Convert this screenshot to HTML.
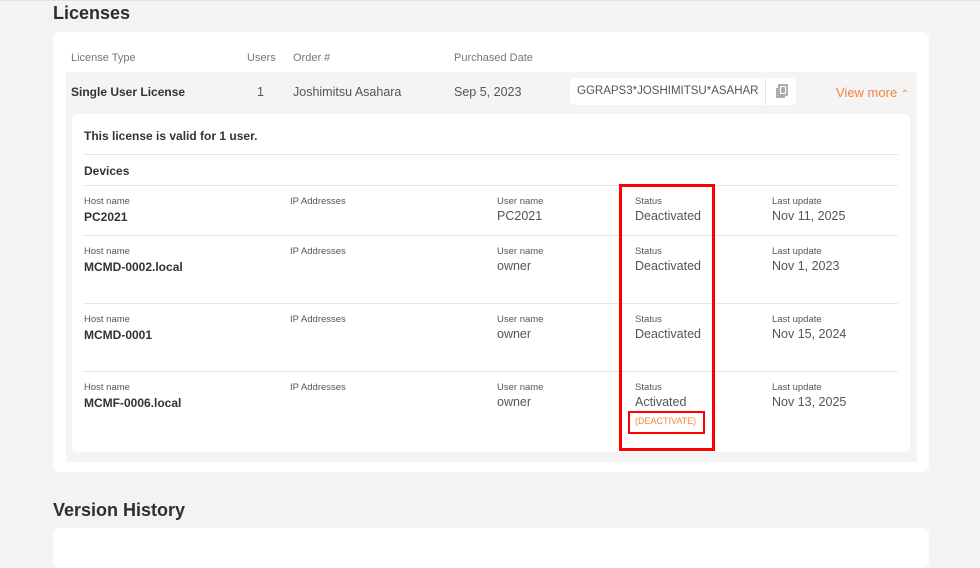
<!DOCTYPE html>
<html><head><style>
*{margin:0;padding:0;box-sizing:border-box}
body{width:980px;height:560px;background:#f3f3f3;font-family:"Liberation Sans",sans-serif;color:#333;position:relative;overflow:hidden}
.a{position:absolute;white-space:nowrap}
.h{font-size:18px;font-weight:bold;color:#2e2e2e}
.th{font-size:11px;color:#777}
.lb{font-size:9.5px;color:#555}
.v{font-size:12.5px;color:#555}
.b{font-size:12px;font-weight:bold;color:#333}
.line{position:absolute;left:84px;width:814px;height:1px;background:#e6e6e6}
</style></head><body>
<div class="a" style="left:0;top:0;width:980px;height:1px;background:#e2e2e2"></div>
<div class="a h" style="left:53px;top:3px">Licenses</div>
<div class="a" style="left:53px;top:32px;width:876px;height:440px;background:#fff;border-radius:6px"></div>
<div class="a th" style="left:71px;top:52px">License Type</div>
<div class="a th" style="left:247px;top:52px">Users</div>
<div class="a th" style="left:293px;top:52px">Order #</div>
<div class="a th" style="left:454px;top:52px">Purchased Date</div>
<div class="a" style="left:66px;top:72px;width:851px;height:390px;background:#f4f4f4"></div>
<div class="a b" style="left:71px;top:85px">Single User License</div>
<div class="a v" style="left:257px;top:85px">1</div>
<div class="a v" style="left:293px;top:85px">Joshimitsu Asahara</div>
<div class="a v" style="left:454px;top:85px">Sep 5, 2023</div>
<div class="a" style="left:570px;top:78px;width:226px;height:27px;background:#fff;border-radius:4px"></div>
<div class="a" style="left:765px;top:78px;width:1px;height:27px;background:#e6e6e6"></div>
<div class="a" style="left:577px;top:85px;font-size:11.5px;color:#555;width:182px;overflow:hidden">GGRAPS3*JOSHIMITSU*ASAHARA*8</div>
<svg class="a" style="left:775px;top:84px" width="14" height="14" viewBox="0 0 14 14" fill="none" stroke="#777" stroke-width="1.2"><rect x="4" y="1" width="8" height="10"/><path d="M2 4v9h8"/><path d="M6 4h4M6 6h4M6 8h4"/></svg>
<div class="a" style="left:836px;top:85px;font-size:13px;color:#f5843c">View more <span style="font-size:10px">⌃</span></div>
<div class="a" style="left:72px;top:114px;width:838px;height:338px;background:#fff;border-radius:5px"></div>
<div class="a b" style="left:84px;top:129px">This license is valid for 1 user.</div>
<div class="line" style="top:154px"></div>
<div class="a b" style="left:84px;top:164px">Devices</div>
<div class="line" style="top:185px"></div>
<div class="line" style="top:235px"></div>
<div class="line" style="top:303px"></div>
<div class="line" style="top:371px"></div>

<div class="a lb" style="left:84px;top:196px">Host name</div><div class="a b" style="left:84px;top:210px">PC2021</div>
<div class="a lb" style="left:290px;top:196px">IP Addresses</div>
<div class="a lb" style="left:497px;top:196px">User name</div><div class="a v" style="left:497px;top:209px">PC2021</div>
<div class="a lb" style="left:635px;top:196px">Status</div><div class="a v" style="left:635px;top:209px">Deactivated</div>
<div class="a lb" style="left:772px;top:196px">Last update</div><div class="a v" style="left:772px;top:209px">Nov 11, 2025</div>

<div class="a lb" style="left:84px;top:246px">Host name</div><div class="a b" style="left:84px;top:260px">MCMD-0002.local</div>
<div class="a lb" style="left:290px;top:246px">IP Addresses</div>
<div class="a lb" style="left:497px;top:246px">User name</div><div class="a v" style="left:497px;top:259px">owner</div>
<div class="a lb" style="left:635px;top:246px">Status</div><div class="a v" style="left:635px;top:259px">Deactivated</div>
<div class="a lb" style="left:772px;top:246px">Last update</div><div class="a v" style="left:772px;top:259px">Nov 1, 2023</div>

<div class="a lb" style="left:84px;top:314px">Host name</div><div class="a b" style="left:84px;top:328px">MCMD-0001</div>
<div class="a lb" style="left:290px;top:314px">IP Addresses</div>
<div class="a lb" style="left:497px;top:314px">User name</div><div class="a v" style="left:497px;top:327px">owner</div>
<div class="a lb" style="left:635px;top:314px">Status</div><div class="a v" style="left:635px;top:327px">Deactivated</div>
<div class="a lb" style="left:772px;top:314px">Last update</div><div class="a v" style="left:772px;top:327px">Nov 15, 2024</div>

<div class="a lb" style="left:84px;top:382px">Host name</div><div class="a b" style="left:84px;top:396px">MCMF-0006.local</div>
<div class="a lb" style="left:290px;top:382px">IP Addresses</div>
<div class="a lb" style="left:497px;top:382px">User name</div><div class="a v" style="left:497px;top:395px">owner</div>
<div class="a lb" style="left:635px;top:382px">Status</div><div class="a v" style="left:635px;top:395px">Activated</div>
<div class="a" style="left:635px;top:416px;font-size:9px;color:#f5843c">(DEACTIVATE)</div>
<div class="a lb" style="left:772px;top:382px">Last update</div><div class="a v" style="left:772px;top:395px">Nov 13, 2025</div>

<div class="a" style="left:619px;top:184px;width:96px;height:267px;border:3px solid #f00"></div>
<div class="a" style="left:628px;top:411px;width:77px;height:23px;border:2px solid #f00"></div>

<div class="a h" style="left:53px;top:500px">Version History</div>
<div class="a" style="left:53px;top:528px;width:876px;height:40px;background:#fff;border-radius:6px"></div>
</body></html>
